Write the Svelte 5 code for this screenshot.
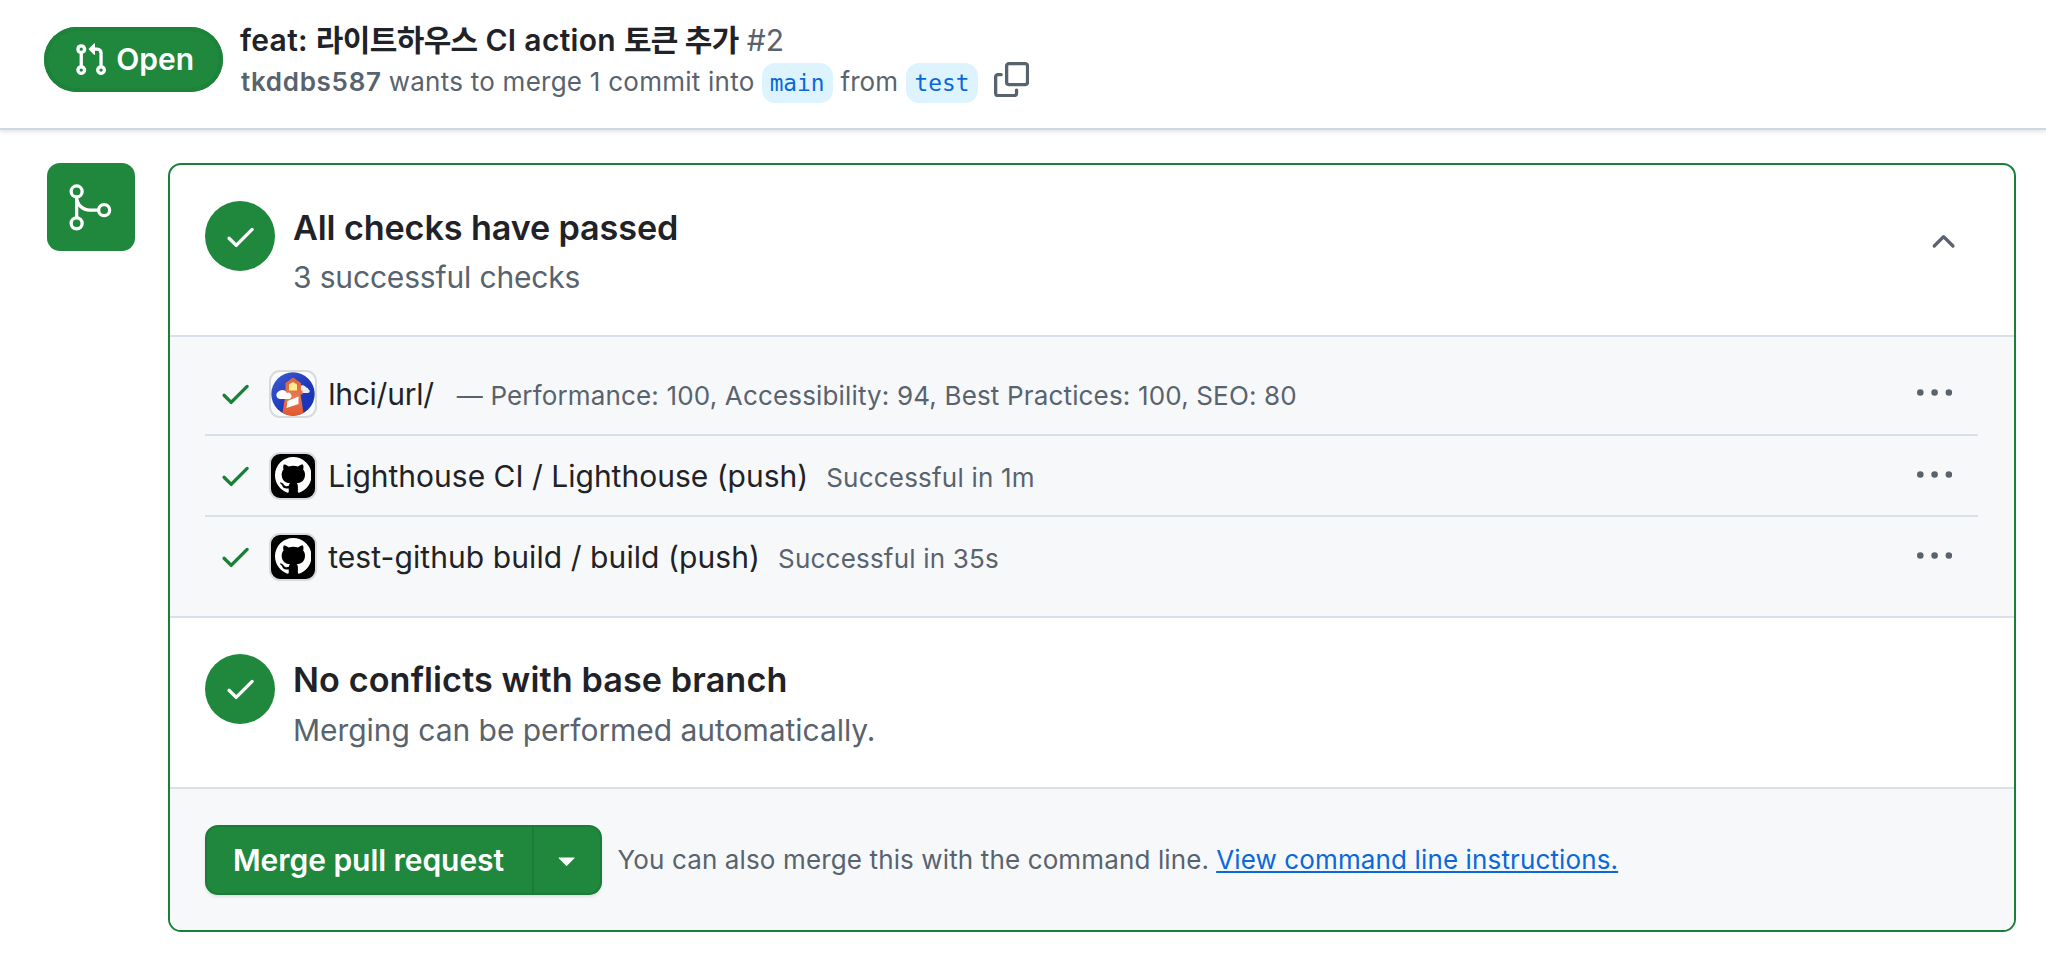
<script>
  const checks = [
    {
      name: 'lhci/url/',
      note: '— Performance: 100, Accessibility: 94, Best Practices: 100, SEO: 80',
      app: 'lighthouse',
      kind: 'url'
    },
    { name: 'Lighthouse CI / Lighthouse (push)', note: 'Successful in 1m', app: 'github', kind: 'lh' },
    { name: 'test-github build / build (push)', note: 'Successful in 35s', app: 'github', kind: 'build' }
  ];
</script>

{#snippet check(cls)}
  <svg class="icon {cls}" viewBox="0 0 16 16" aria-hidden="true">
    <path d="M13.78 4.22a.75.75 0 0 1 0 1.06l-7.25 7.25a.75.75 0 0 1-1.06 0L2.22 9.28a.751.751 0 0 1 .018-1.042.751.751 0 0 1 1.042-.018L6 10.94l6.72-6.72a.75.75 0 0 1 1.06 0Z" />
  </svg>
{/snippet}

<header class="header">
  <span class="state">
    <svg class="icon" viewBox="0 0 16 16" aria-hidden="true">
      <path d="M1.5 3.25a2.25 2.25 0 1 1 3 2.122v5.256a2.251 2.251 0 1 1-1.5 0V5.372A2.25 2.25 0 0 1 1.5 3.25Zm5.677-.177L9.573.677A.25.25 0 0 1 10 .854V2.5h1A2.5 2.5 0 0 1 13.5 5v5.628a2.251 2.251 0 1 1-1.5 0V5a1 1 0 0 0-1-1h-1v1.646a.25.25 0 0 1-.427.177L7.177 3.427a.25.25 0 0 1 0-.354ZM3.75 2.5a.75.75 0 1 0 0 1.5.75.75 0 0 0 0-1.5Zm0 9.5a.75.75 0 1 0 0 1.5.75.75 0 0 0 0-1.5Zm8.25.75a.75.75 0 1 0 1.5 0 .75.75 0 0 0-1.5 0Z" />
    </svg>
    <span>Open</span>
  </span>
  <div class="summary">
    <h1 class="title">
      <span class="name">feat: <span class="ko">라이트하우스</span> CI action <span class="ko">토큰 추가</span></span>
      <span class="number">#2</span>
    </h1>
    <div class="meta">
      <span class="author">tkddbs587</span>
      <span class="action">wants to merge 1 commit into</span>
      <span class="branch base">main</span>
      <span class="from">from</span>
      <span class="branch head">test</span>
      <svg class="icon copy" viewBox="0 0 16 16" aria-hidden="true">
        <path d="M0 6.75C0 5.784.784 5 1.75 5h1.5a.75.75 0 0 1 0 1.5h-1.5a.25.25 0 0 0-.25.25v7.5c0 .138.112.25.25.25h7.5a.25.25 0 0 0 .25-.25v-1.5a.75.75 0 0 1 1.5 0v1.5A1.75 1.75 0 0 1 9.25 16h-7.5A1.75 1.75 0 0 1 0 14.25Z" />
        <path d="M5 1.75C5 .784 5.784 0 6.75 0h7.5C15.216 0 16 .784 16 1.75v7.5A1.75 1.75 0 0 1 14.25 11h-7.5A1.75 1.75 0 0 1 5 9.25Zm1.75-.25a.25.25 0 0 0-.25.25v7.5c0 .138.112.25.25.25h7.5a.25.25 0 0 0 .25-.25v-7.5a.25.25 0 0 0-.25-.25Z" />
      </svg>
    </div>
  </div>
</header>

<main class="timeline">
  <div class="badge">
    <svg viewBox="0 0 24 24" aria-hidden="true">
      <g fill="none" stroke="#fff" stroke-width="1.5">
        <circle cx="5.75" cy="4.75" r="2.5" />
        <circle cx="5.75" cy="19.25" r="2.5" />
        <circle cx="18.25" cy="13.25" r="2.5" />
        <path d="M5.75 7.25v9.5M5.75 7.25a6 6 0 0 0 6 6h4" />
      </g>
    </svg>
  </div>

  <section class="box">
    <div class="status">
      <span class="circle">{@render check('')}</span>
      <div class="words">
        <h2>All checks have passed</h2>
        <p class="passed">3 successful checks</p>
      </div>
      <svg class="icon chevron" viewBox="0 0 16 16" aria-hidden="true">
        <path d="M3.22 10.53a.749.749 0 0 1 0-1.06l4.25-4.25a.749.749 0 0 1 1.06 0l4.25 4.25a.749.749 0 1 1-1.06 1.06L8 6.811 4.28 10.53a.749.749 0 0 1-1.06 0Z" />
      </svg>
    </div>

    <ul class="checks">
      {#each checks as item}
        <li>
          {@render check('ok')}
          <span class="avatar {item.app}">
            {#if item.app === 'github'}
              <svg class="mark" viewBox="0 0 16 16" aria-hidden="true">
                <path d="M8 0C3.58 0 0 3.58 0 8c0 3.54 2.29 6.53 5.47 7.59.4.07.55-.17.55-.38 0-.19-.01-.82-.01-1.49-2.01.37-2.53-.49-2.69-.94-.09-.23-.48-.94-.82-1.13-.28-.15-.68-.52-.01-.53.63-.01 1.08.58 1.23.82.72 1.21 1.87.87 2.33.66.07-.52.28-.87.51-1.07-1.78-.2-3.64-.89-3.64-3.95 0-.87.31-1.59.82-2.15-.08-.2-.36-1.02.08-2.12 0 0 .67-.21 2.2.82.64-.18 1.32-.27 2-.27.68 0 1.36.09 2 .27 1.53-1.04 2.2-.82 2.2-.82.44 1.1.16 1.92.08 2.12.51.56.82 1.27.82 2.15 0 3.07-1.87 3.75-3.65 3.95.29.25.54.73.54 1.48 0 1.07-.01 1.93-.01 2.2 0 .21.15.46.55.38A8.013 8.013 0 0 0 16 8c0-4.42-3.58-8-8-8Z" />
              </svg>
            {:else}
              <svg class="lamp" viewBox="0 0 44 44" aria-hidden="true">
                <defs>
                  <clipPath id="disc"><circle cx="22" cy="22" r="21.7" /></clipPath>
                  <linearGradient id="sky" x1="0" y1="0" x2="1" y2="1">
                    <stop offset="0" stop-color="#3f5fd0" />
                    <stop offset=".55" stop-color="#2039bb" />
                    <stop offset="1" stop-color="#1330b8" />
                  </linearGradient>
                  <linearGradient id="tower" x1="0" y1="0" x2="0" y2="1">
                    <stop offset="0" stop-color="#e2633c" />
                    <stop offset=".5" stop-color="#e8784f" />
                    <stop offset="1" stop-color="#e2582c" />
                  </linearGradient>
                </defs>
                <g clip-path="url(#disc)">
                  <rect width="44" height="44" fill="url(#sky)" />
                  <path d="M30 20a3.500 3.500 0 0 1-1-6 4.200 4.200 0 0 1 6 1.200 2.700 2.700 0 0 1 2.500 2.300 1.800 1.800 0 0 1-.800 3.500H31Z" fill="#e9ecf4" />
                  <path d="M14.500 11 22 5.500l8 5.500v7.500h1.500v4H29.500L33 44H11l3.500-21.500H13V18.500h1.500Z" fill="url(#tower)" />
                  <path d="m18 12.500 4-2.500 4 2.500v6h-8Z" fill="#fbee91" />
                  <path d="m16.500 29 11-4.500V32L15.500 36Z" fill="#fff" />
                  <path d="M8.500 27a4 4 0 0 1-1-7.500 5 5 0 0 1 8.300 1.500 3 3 0 0 1 2.700 6Z" fill="#fff" />
                </g>
              </svg>
            {/if}
          </span>
          <span class="label">
            <span class="check-name {item.kind}">{item.name}</span>
            <span class="check-note {item.kind}">{item.note}</span>
          </span>
          <svg class="icon kebab" viewBox="0 0 16 16" aria-hidden="true">
            <path d="M8 9a1.5 1.5 0 1 0 0-3 1.5 1.5 0 0 0 0 3ZM1.5 9a1.5 1.5 0 1 0 0-3 1.5 1.5 0 0 0 0 3Zm13 0a1.5 1.5 0 1 0 0-3 1.5 1.5 0 0 0 0 3Z" />
          </svg>
        </li>
      {/each}
    </ul>

    <div class="status conflicts">
      <span class="circle">{@render check('')}</span>
      <div class="words">
        <h2>No conflicts with base branch</h2>
        <p>Merging can be performed automatically.</p>
      </div>
    </div>

    <div class="merge">
      <div class="buttons">
        <button class="main-button"><span>Merge pull request</span></button>
        <button class="menu-button" aria-label="Select merge method">
          <svg class="icon" viewBox="0 0 16 16" aria-hidden="true">
            <path d="m4.427 7.427 3.396 3.396a.25.25 0 0 0 .354 0l3.396-3.396A.25.25 0 0 0 11.396 7H4.604a.25.25 0 0 0-.177.427Z" />
          </svg>
        </button>
      </div>
      <p class="hint">You can also merge this with the command line.</p>
      <a href="#cli">View command line instructions.</a>
    </div>
  </section>
</main>

<style>
  :global(body) {
    background: #fff;
    color: #1f2328;
    font-family: Inter, 'Noto Sans CJK KR', sans-serif;
    white-space: nowrap;
  }
  h1, h2, p, ul { margin: 0; padding: 0; }
  .icon {
    display: block;
    flex: none;
    width: 35.2px;
    height: 35.2px;
    fill: currentColor;
  }

  .header {
    display: flex;
    align-items: flex-start;
    height: 128px;
    border-bottom: 2px solid #d1d9e0;
    box-shadow: 0 2px 4px rgba(31, 35, 40, 0.12);
  }
  .state {
    box-sizing: border-box;
    display: flex;
    align-items: center;
    gap: 8px;
    width: 179px;
    height: 65px;
    margin: 27px 0 0 44px;
    padding-left: 29px;
    border-radius: 33px;
    background: #1f883d;
    box-shadow: inset 0 0 0 4px #1d823a;
    color: #fff;
    font-size: 30px;
    font-weight: 600;
    line-height: 65px;
  }
  .summary { margin: 19px 0 0 17px; }
  .title {
    display: flex;
    gap: 8px;
    font-size: 30px;
    font-weight: 600;
    line-height: 42px;
  }
  .name { letter-spacing: 0.32px; }
  .ko { letter-spacing: -0.65px; }
  .number { color: #59636e; font-weight: 400; }
  .meta {
    display: flex;
    align-items: flex-start;
    margin-top: 2px;
    color: #59636e;
    font-size: 26px;
    line-height: 38px;
  }
  .author { font-weight: 600; letter-spacing: 0.7px; margin: 0 7px 0 1px; }
  .action { letter-spacing: 0.25px; margin-right: 7px; }
  .from { margin: 0 8px; }
  .branch {
    height: 40px;
    border-radius: 13px;
    background: #ddf4ff;
    color: #0969da;
    font-family: 'DejaVu Sans Mono', monospace;
    font-size: 22.8px;
    line-height: 40px;
    text-align: center;
  }
  .base { width: 71px; }
  .head { width: 72px; }
  .copy { margin: -1px 0 0 16px; }

  .timeline {
    display: flex;
    align-items: flex-start;
    gap: 33px;
    padding: 33px 30px 0 47px;
  }
  .badge {
    flex: none;
    display: flex;
    align-items: center;
    justify-content: center;
    width: 88px;
    height: 88px;
    border-radius: 13px;
    background: #1f883d;
  }
  .badge svg { width: 52.8px; height: 52.8px; margin-left: -2px; }

  .box {
    flex: 1;
    overflow: hidden;
    border: 2px solid #1a7f37;
    border-radius: 13px;
  }
  .status {
    box-sizing: border-box;
    display: flex;
    align-items: flex-start;
    height: 170px;
    padding: 36px 53px 0 35px;
  }
  .conflicts { height: 169px; padding-top: 35.5px; }
  .circle {
    box-sizing: border-box;
    flex: none;
    display: flex;
    align-items: center;
    justify-content: center;
    width: 70px;
    height: 70px;
    padding: 1px 0 0 1px;
    border-radius: 50%;
    background: #1f883d;
    color: #fff;
  }
  .words { flex: 1; padding: 5px 0 0 18px; }
  h2 {
    font-size: 34.2px;
    font-weight: 600;
    line-height: 44px;
    letter-spacing: -0.12px;
  }
  .words p {
    margin-top: 5px;
    color: #59636e;
    font-size: 30px;
    line-height: 44px;
    letter-spacing: -0.04px;
  }
  .words .passed { letter-spacing: -0.16px; }
  .conflicts .words { padding-top: 4.5px; }
  .conflicts h2 { letter-spacing: 0.1px; }
  .conflicts .words p { margin-top: 6px; }
  .chevron { margin-top: 23px; color: #59636e; }

  .checks {
    padding: 18px 36px 20px 35px;
    border-top: 2px solid #dae0e7;
    border-bottom: 2px solid #dae0e7;
    background: #f6f8fa;
    list-style: none;
  }
  li {
    display: flex;
    align-items: center;
    height: 78px;
    padding: 0 26px 1px 13px;
  }
  li + li {
    height: 79px;
    padding-bottom: 0;
    border-top: 2px solid #dae0e7;
  }
  .ok { color: #1a7f37; }
  .avatar {
    box-sizing: border-box;
    flex: none;
    display: flex;
    align-items: center;
    justify-content: center;
    width: 48px;
    height: 48px;
    margin-left: 16px;
    border: 2px solid #d8dadd;
    border-radius: 11px;
  }
  .lighthouse { background: #fafbfc; }
  .github { background: #000; }
  .lamp { width: 44px; height: 44px; }
  .mark { width: 36.6px; height: 36.6px; fill: #fff; }
  .label {
    flex: 1;
    display: flex;
    align-items: baseline;
    margin-left: 11px;
    padding-top: 2px;
    font-size: 30px;
    line-height: 44px;
  }
  .check-note { margin-left: 18px; color: #59636e; font-size: 26px; letter-spacing: 0.2px; }
  .check-name.url { letter-spacing: -0.25px; }
  .check-name.build { letter-spacing: 0.08px; }
  .check-note.url { margin-left: 23px; letter-spacing: 0.16px; }
  .kebab { color: #59636e; }

  .merge {
    display: flex;
    align-items: center;
    height: 70px;
    padding: 36px 35px 35px;
    border-top: 2px solid #dae0e7;
    background: #f6f8fa;
    font-size: 26px;
    line-height: 40px;
  }
  .buttons {
    display: flex;
    border-radius: 13px;
    box-shadow: 0 2px 3px rgba(31, 35, 40, 0.1);
  }
  button {
    box-sizing: border-box;
    height: 70px;
    margin: 0;
    padding: 0;
    border: 2px solid #1d7b39;
    background: #1f883d;
    color: #fff;
    font: 600 30px/66px Inter, sans-serif;
    letter-spacing: -0.05px;
  }
  .main-button {
    width: 329px;
    padding: 0 0 0 26px;
    border-radius: 13px 0 0 13px;
    text-align: left;
  }
  .menu-button {
    display: flex;
    align-items: center;
    justify-content: center;
    width: 68px;
    border-left: 0;
    border-radius: 0 13px 13px 0;
  }
  .hint { margin: 0 7px 0 15.5px; color: #59636e; letter-spacing: 0.13px; }
  .merge a {
    color: #0969da;
    letter-spacing: 0.13px;
    text-decoration: underline;
    text-decoration-thickness: 2px;
    text-underline-offset: 2px;
    text-decoration-skip-ink: none;
  }
</style>
